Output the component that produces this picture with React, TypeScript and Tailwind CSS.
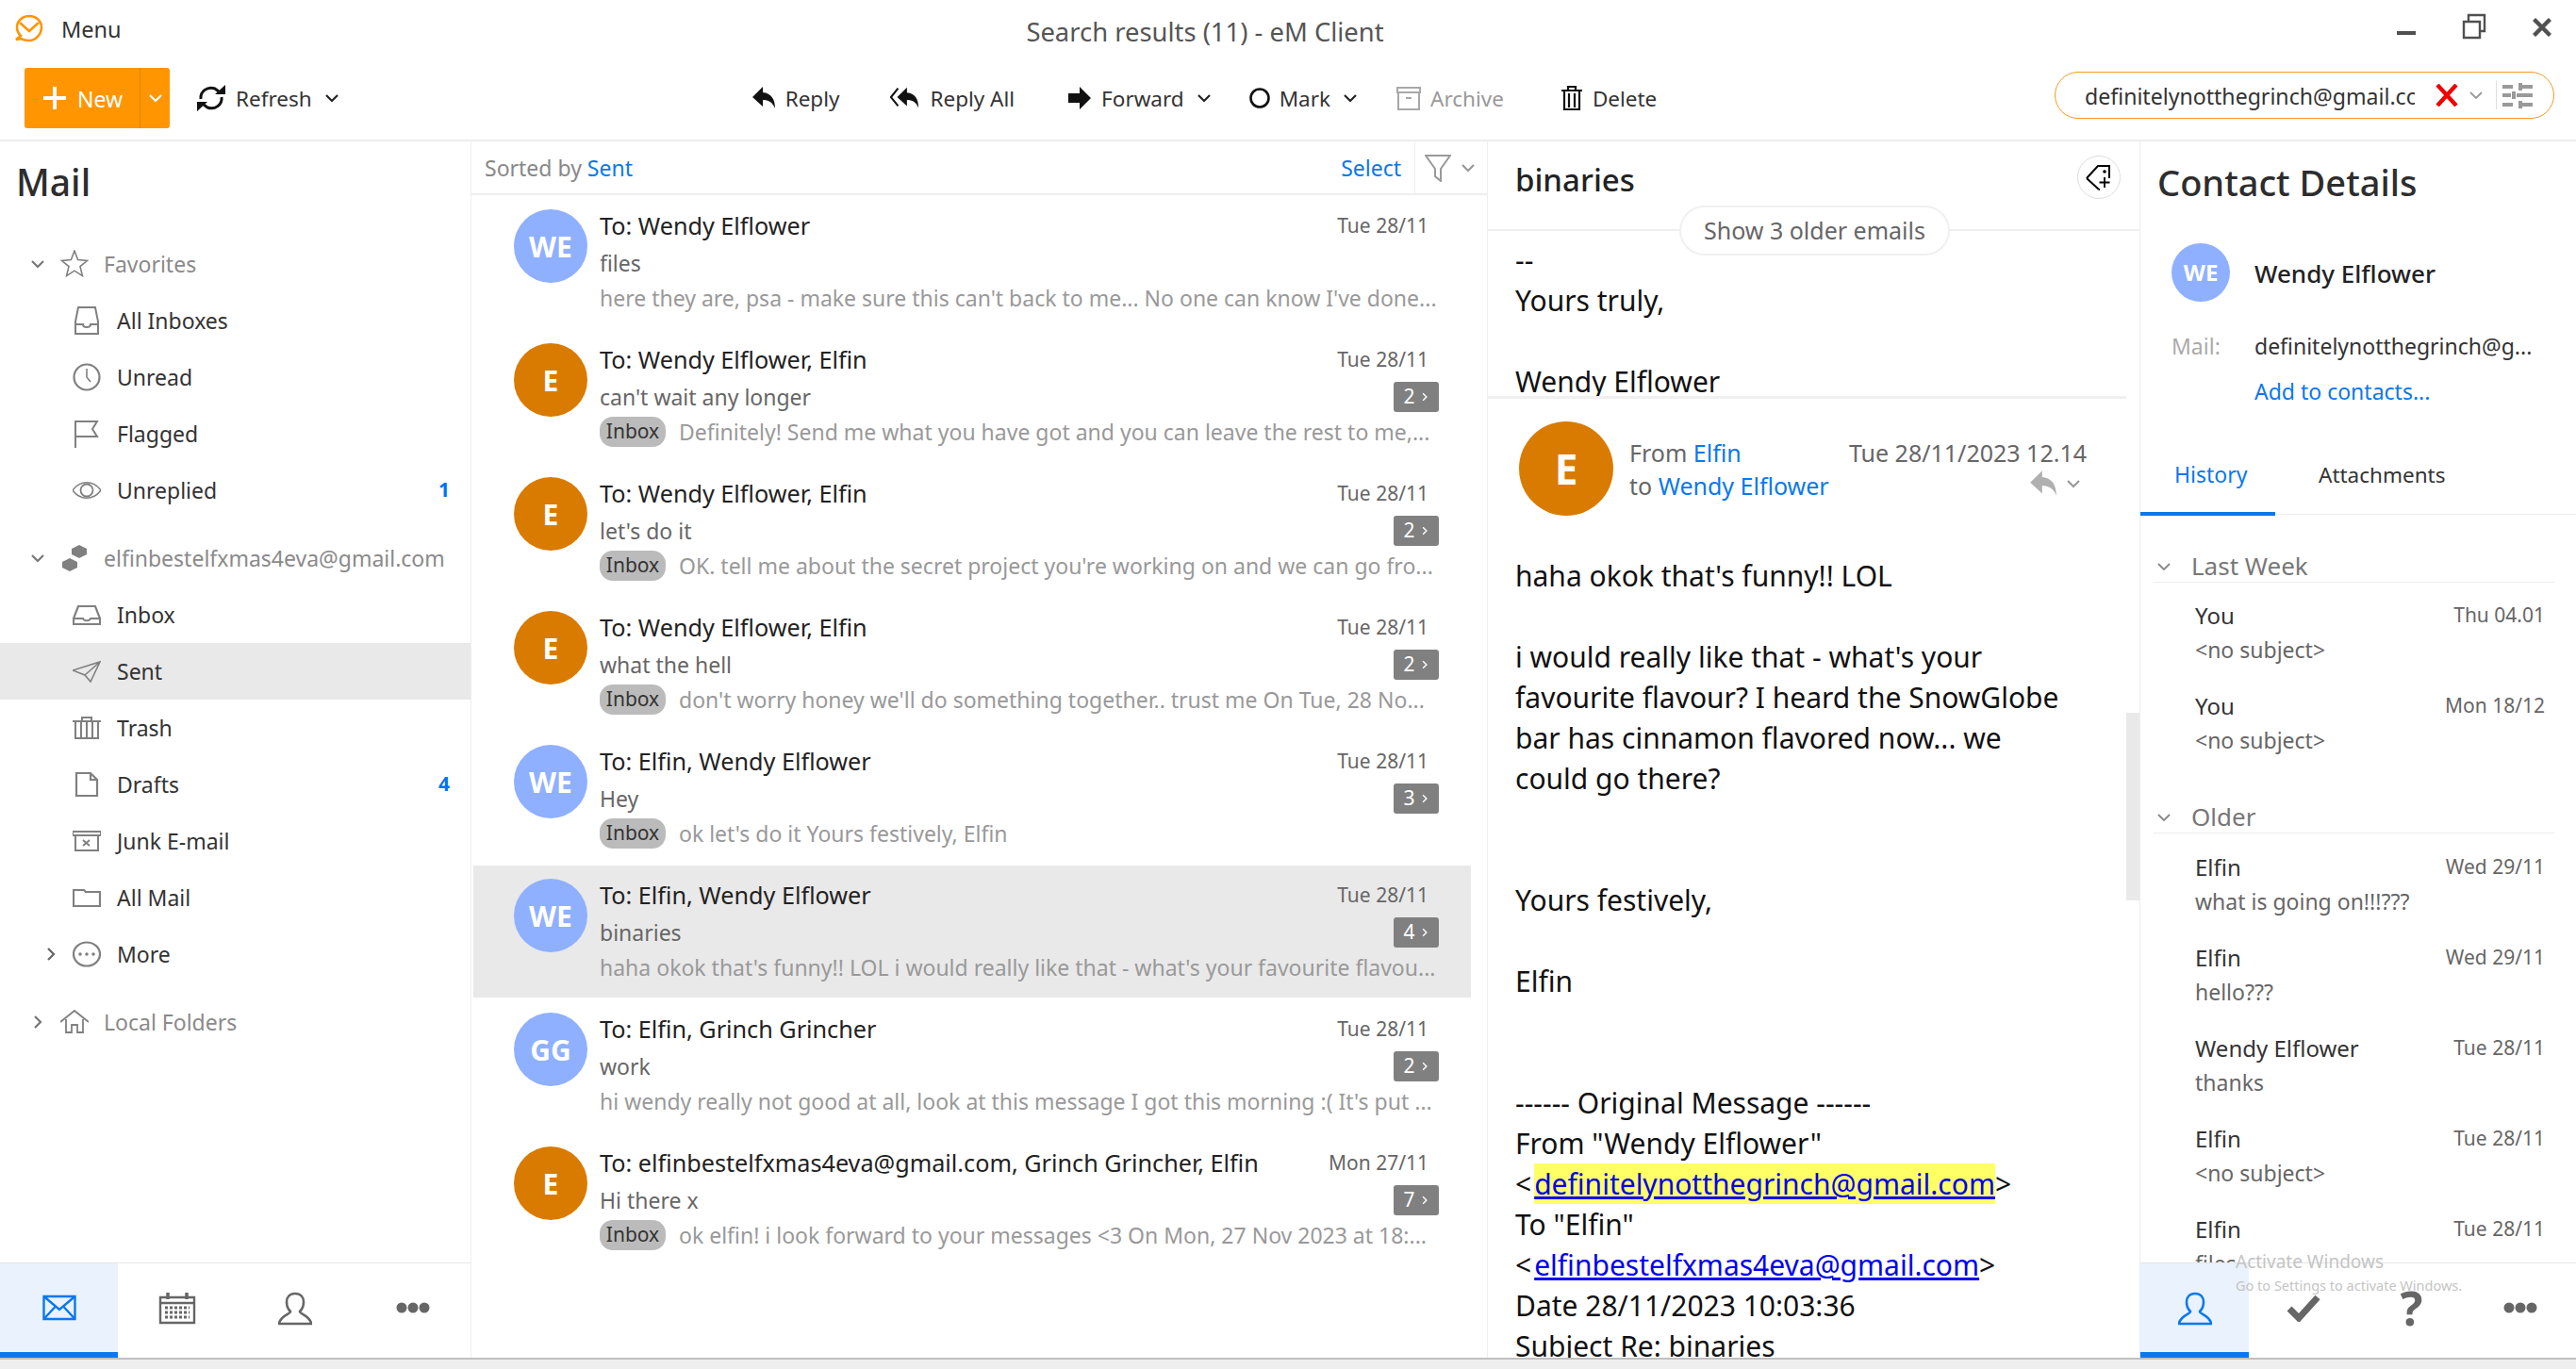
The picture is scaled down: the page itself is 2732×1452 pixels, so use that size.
import type { ReactNode } from 'react';

const FONT = 'font-["Noto_Sans","Open_Sans",sans-serif]';

function Icon({ children, w, h, vb, cls = '' }: { children: ReactNode; w: number; h: number; vb: string; cls?: string }) {
  return (
    <svg width={w} height={h} viewBox={vb} fill="none" stroke="currentColor" className={`shrink-0 ${cls}`}>
      {children}
    </svg>
  );
}

function Chevron({ dir = 'down', size = 16, cls = 'text-[#333]', sw = 2.2 }: { dir?: 'down' | 'right'; size?: number; cls?: string; sw?: number }) {
  return (
    <Icon w={size} h={size} vb="0 0 16 16" cls={cls}>
      {dir === 'down' ? <path d="M2 5l6 6 6-6" strokeWidth={sw} /> : <path d="M5 2l6 6-6 6" strokeWidth={sw} />}
    </Icon>
  );
}

const folderIcons: Record<string, ReactNode> = {
  star: <path d="M15 1l3.6 9.6 10 .8-7.6 6.2 2.4 10-8.4-5.4-8.4 5.4 2.4-10-7.6-6.2 10-.8z" strokeWidth="1.6" />,
  inboxTall: (
    <>
      <path d="M3 16L6 1h18l3 15v13H3z" strokeWidth="2" />
      <path d="M3 19h8c0 4 8 4 8 0h8" strokeWidth="2" />
    </>
  ),
  clock: (
    <>
      <circle cx="15" cy="15" r="13.5" strokeWidth="2.2" />
      <path d="M15 6v9l4 5" strokeWidth="1.6" />
    </>
  ),
  flag: <path d="M3 30V2h23l-5 8 5 8H3" strokeWidth="2" />,
  eye: (
    <>
      <path d="M0 15c8-11 22-11 30 0-8 11-22 11-30 0z" strokeWidth="1.5" />
      <circle cx="15" cy="15" r="6.5" strokeWidth="1.8" />
    </>
  ),
  inbox: (
    <>
      <path d="M1 19L6 6h18l5 13v6H1z" strokeWidth="2.2" />
      <path d="M1 19h10c1 3 7 3 8 0h10" strokeWidth="2" />
    </>
  ),
  send: <path d="M0 14L29 5 19 26l-6-7zM13 19L29 5" strokeWidth="1.6" />,
  trash: <path d="M0 8h30M10 8V4h10v4M3 8v18h24V8M9 8v18M15 8v18M21 8v18" strokeWidth="2" />,
  draft: <path d="M4 3h15l7 7v17H4zM19 3v7h7" strokeWidth="2.2" />,
  junk: <path d="M0 5h30v4H0zM3 9v16h24V9M11 14l7 6M18 14l-7 6" strokeWidth="2" />,
  folder: <path d="M1 7h11l2 2h15v15H1z" strokeWidth="2.2" />,
  more: (
    <>
      <ellipse cx="15" cy="15" rx="14" ry="12.5" strokeWidth="2.2" />
      <circle cx="8" cy="15" r="1.8" fill="currentColor" stroke="none" />
      <circle cx="15" cy="15" r="1.8" fill="currentColor" stroke="none" />
      <circle cx="22" cy="15" r="1.8" fill="currentColor" stroke="none" />
    </>
  ),
  home: <path d="M0 15L15 3l15 12M6 12v14h6v-8h6v8h6V12" strokeWidth="1.8" />,
};

function FolderIcon({ name }: { name: string }) {
  return (
    <Icon w={30} h={30} vb="0 0 30 30" cls="text-[#808080]">
      {folderIcons[name]}
    </Icon>
  );
}

function FolderRow({ icon, label, count, active, chevron }: { icon: string; label: string; count?: string; active?: boolean; chevron?: boolean }) {
  return (
    <div className={`flex h-[60px] items-center pl-[77px] pr-[22px] relative ${active ? 'bg-[#e9e9e9]' : ''}`}>
      {chevron && (
        <div className="absolute left-[46px]">
          <Chevron dir="right" size={16} cls="text-[#666]" />
        </div>
      )}
      <FolderIcon name={icon} />
      <span className="ml-[17px] text-[23px] text-[#333] flex-1">{label}</span>
      {count && <span className="text-[21px] font-bold text-[#0073f0]">{count}</span>}
    </div>
  );
}

function GroupRow({ open, icon, label, extra }: { open: boolean; icon: ReactNode; label: string; extra?: string }) {
  return (
    <div className={`flex h-[60px] items-center pl-[32px] ${extra ?? ''}`}>
      <div className="w-[16px] flex justify-center">
        <Chevron dir={open ? 'down' : 'right'} size={16} cls="text-[#777]" />
      </div>
      <div className="ml-[16px] w-[30px] flex justify-center">{icon}</div>
      <span className="ml-[16px] text-[23px] text-[#8a8a8a]">{label}</span>
    </div>
  );
}

function Sidebar() {
  return (
    <div className="w-[500px] shrink-0 border-r border-[#eeeeee] flex flex-col">
      <div className="h-[100px] pl-[17px] pt-[16px] text-[39px] leading-[54px] font-medium text-[#2d2d2d]">Mail</div>
      <GroupRow open icon={<FolderIcon name="star" />} label="Favorites" />
      <FolderRow icon="inboxTall" label="All Inboxes" />
      <FolderRow icon="clock" label="Unread" />
      <FolderRow icon="flag" label="Flagged" />
      <FolderRow icon="eye" label="Unreplied" count="1" />
      <GroupRow
        open
        extra="mt-[12px]"
        label="elfinbestelfxmas4eva@gmail.com"
        icon={
          <svg width="28" height="32" viewBox="0 0 28 32" className="text-[#808080] shrink-0" fill="currentColor">
            <path d="M11 6l8-4 8 4v6l-8 4-8-4zM1 20l8-4 8 4v6l-8 4-8-4z" />
          </svg>
        }
      />
      <FolderRow icon="inbox" label="Inbox" />
      <FolderRow icon="send" label="Sent" active />
      <FolderRow icon="trash" label="Trash" />
      <FolderRow icon="draft" label="Drafts" count="4" />
      <FolderRow icon="junk" label="Junk E-mail" />
      <FolderRow icon="folder" label="All Mail" />
      <FolderRow icon="more" label="More" chevron />
      <GroupRow open={false} extra="mt-[12px]" icon={<FolderIcon name="home" />} label="Local Folders" />
      <div className="mt-auto h-[101px] border-t border-[#e6e6e6] flex">
        <NavCell w="w-[125px]" active>
          <Icon w={36} h={28} vb="0 0 36 28" cls="text-[#0a78ee]">
            <path d="M1.5 2h33v24h-33zM1.5 2L18 16 34.5 2M1.5 26l12-13M34.5 26l-12-13" strokeWidth="2.4" />
          </Icon>
        </NavCell>
        <NavCell w="w-[125px]">
          <Icon w={40} h={36} vb="0 0 40 36" cls="text-[#666]">
            <path d="M2 7h36v27H2zM2 13h36" strokeWidth="2.4" />
            <path d="M10 2v7M30 2v7" strokeWidth="3.5" />
            <path d="M7 18h26M7 23h26M7 28h26" strokeWidth="3" strokeDasharray="3 2" />
          </Icon>
        </NavCell>
        <NavCell w="w-[125px]">
          <PersonIcon cls="text-[#666]" />
        </NavCell>
        <NavCell w="w-[125px]">
          <Dots />
        </NavCell>
      </div>
    </div>
  );
}

function PersonIcon({ cls }: { cls: string }) {
  return (
    <Icon w={36} h={36} vb="0 0 36 36" cls={`mt-[2px] ${cls}`}>
      <path d="M18 2c6 0 9 4 9 9 0 4-2 8-4 10 0 3 11 4 12 13H1c1-9 12-10 12-13-2-2-4-6-4-10 0-5 3-9 9-9z" strokeWidth="2.6" />
    </Icon>
  );
}

function Dots() {
  return (
    <svg width="36" height="12" viewBox="0 0 36 12" className="text-[#666]" fill="currentColor">
      <circle cx="6" cy="6" r="5.5" />
      <circle cx="18" cy="6" r="5.5" />
      <circle cx="30" cy="6" r="5.5" />
    </svg>
  );
}

function NavCell({ children, active, w }: { children: ReactNode; active?: boolean; w: string }) {
  return (
    <div className={`${w} shrink-0 flex items-center justify-center border-b-[6px] ${active ? 'bg-[#e9f2fd] border-[#0a78ee]' : 'border-transparent'}`}>
      {children}
    </div>
  );
}

type Msg = { initials: string; to: string; subject: string; date: string; preview: string; badge?: string; inbox?: boolean; active?: boolean };

const messages: Msg[] = [
  { initials: 'WE', to: 'To: Wendy Elflower', subject: 'files', date: 'Tue 28/11', preview: "here they are, psa - make sure this can't back to me... No one can know I've done..." },
  { initials: 'E', to: 'To: Wendy Elflower, Elfin', subject: "can't wait any longer", date: 'Tue 28/11', badge: '2', inbox: true, preview: 'Definitely! Send me what you have got and you can leave the rest to me,...' },
  { initials: 'E', to: 'To: Wendy Elflower, Elfin', subject: "let's do it", date: 'Tue 28/11', badge: '2', inbox: true, preview: "OK. tell me about the secret project you're working on and we can go fro..." },
  { initials: 'E', to: 'To: Wendy Elflower, Elfin', subject: 'what the hell', date: 'Tue 28/11', badge: '2', inbox: true, preview: "don't worry honey we'll do something together.. trust me On Tue, 28 No..." },
  { initials: 'WE', to: 'To: Elfin, Wendy Elflower', subject: 'Hey', date: 'Tue 28/11', badge: '3', inbox: true, preview: "ok let's do it Yours festively, Elfin" },
  { initials: 'WE', to: 'To: Elfin, Wendy Elflower', subject: 'binaries', date: 'Tue 28/11', badge: '4', active: true, preview: "haha okok that's funny!! LOL i would really like that - what's your favourite flavou..." },
  { initials: 'GG', to: 'To: Elfin, Grinch Grincher', subject: 'work', date: 'Tue 28/11', badge: '2', preview: "hi wendy really not good at all, look at this message I got this morning :( It's put ..." },
  { initials: 'E', to: 'To: elfinbestelfxmas4eva@gmail.com, Grinch Grincher, Elfin', subject: 'Hi there x', date: 'Mon 27/11', badge: '7', inbox: true, preview: 'ok elfin! i look forward to your messages <3 On Mon, 27 Nov 2023 at 18:...' },
];

function Avatar({ initials, size, text }: { initials: string; size: string; text: string }) {
  return (
    <div className={`${size} ${text} ${initials === 'E' ? 'bg-[#d97b00]' : 'bg-[#8fb0ff]'} shrink-0 rounded-full flex items-center justify-center font-bold text-white`}>
      {initials}
    </div>
  );
}

function MessageRow({ m }: { m: Msg }) {
  return (
    <div className={`h-[140px] mb-[2px] flex pl-[43px] pr-[34px] pt-[14px] ${m.active ? 'bg-[#e9e9e9]' : ''}`}>
      <Avatar initials={m.initials} size="w-[78px] h-[78px]" text="text-[30px]" />
      <div className="ml-[13px] flex-1 min-w-0">
        <div className="flex h-[36px] items-center justify-between">
          <span className="text-[25.2px] text-[#222] whitespace-nowrap">{m.to}</span>
          <span className="text-[21px] text-[#666] mr-[11px]">{m.date}</span>
        </div>
        <div className="flex h-[38px] items-center justify-between mt-[1px]">
          <span className="text-[23px] text-[#666] mt-[2px]">{m.subject}</span>
          {m.badge && (
            <span className="w-[48px] h-[32px] mt-[1px] rounded-[3px] bg-[#808080] text-white text-[21px] flex items-center justify-center gap-[5px]">
              {m.badge}
              <Chevron dir="right" size={10} cls="text-white" />
            </span>
          )}
        </div>
        <div className="flex h-[38px] items-center">
          {m.inbox && <span className="w-[70px] h-[32px] mr-[14px] shrink-0 rounded-[14px] bg-[#bbbbbb] text-[21px] text-[#333] flex items-center justify-center">Inbox</span>}
          <span className="text-[23px] text-[#999] whitespace-nowrap">{m.preview}</span>
        </div>
      </div>
    </div>
  );
}

function MessageList() {
  return (
    <div className="w-[1077px] shrink-0 flex flex-col overflow-hidden">
      <div className="h-[57px] shrink-0 border-b-2 border-[#eeeeee] flex items-center pl-[14px] text-[23px]">
        <span className="text-[#888] mt-[2px]">Sorted by&nbsp;</span>
        <span className="text-[#0a78ee] mt-[2px]">Sent</span>
        <span className="ml-auto text-[#0a78ee] mt-[2px]">Select</span>
        <div className="ml-[14px] h-full border-l border-[#eeeeee] pl-[10px] pr-[12px] flex items-center gap-[10px]">
          <Icon w={28} h={30} vb="0 0 28 30" cls="text-[#999]">
            <path d="M1 2h26L17 16v13l-6-5v-8z" strokeWidth="2" />
          </Icon>
          <Chevron size={16} cls="text-[#999]" />
        </div>
      </div>
      <div className="pr-[17px] pl-[2px] pt-[1px]">
        {messages.map((m, i) => (
          <MessageRow key={i} m={m} />
        ))}
      </div>
    </div>
  );
}

function ReplyIcon({ w, h, cls }: { w: number; h: number; cls: string }) {
  return (
    <svg width={w} height={h} viewBox="0 0 26 26" className={`shrink-0 ${cls}`} fill="currentColor">
      <path d="M12 1L1 12l11 10v-7c6 0 10 2 13 9 0-10-4-16-13-17z" />
    </svg>
  );
}

function MessagePane() {
  return (
    <div className="w-[693px] shrink-0 border-x border-[#eeeeee] flex flex-col relative overflow-hidden">
      <div className="h-[95px] shrink-0 border-b-[2px] border-[#efefef] pl-[29px] pt-[16px] flex justify-between pr-[20px]">
        <span className="text-[33px] leading-[50px] font-medium text-[#222]">binaries</span>
        <div className="w-[46px] h-[46px] mt-[-1px] rounded-full border border-[#ddd] flex items-center justify-center">
          <Icon w={30} h={30} vb="0 0 30 30" cls="text-black">
            <path d="M2 16L14 3h12v13M15 28L2 16M16 28h-1" strokeWidth="2" />
            <circle cx="21" cy="9" r="1.8" fill="currentColor" stroke="none" />
            <path d="M21 15v11M15.5 20.5h11" strokeWidth="1.8" />
          </Icon>
        </div>
      </div>
      <div className="absolute top-[68px] left-[203px] w-[287px] h-[53px] rounded-full bg-white border-2 border-[#f0f0f0] flex items-center justify-center text-[25px] text-[#666]">
        Show 3 older emails
      </div>
      <div className="h-[178px] shrink-0 overflow-hidden border-b-[3px] border-[#f0f0f0] mr-[14px] pl-[29px] pt-[9px] text-[30px] leading-[43px] text-[#111]">
        <div>--</div>
        <div>Yours truly,</div>
        <div>&nbsp;</div>
        <div>Wendy Elflower</div>
      </div>
      <div className="h-[166px] shrink-0 pl-[33px] pr-[56px] pt-[24px] flex">
        <Avatar initials="E" size="w-[100px] h-[100px]" text="text-[44px]" />
        <div className="ml-[17px] text-[25px] leading-[35px] text-[#666] pt-[16px]">
          <div>
            From <span className="text-[#0a78ee]">Elfin</span>
          </div>
          <div>
            to <span className="text-[#0a78ee]">Wendy Elflower</span>
          </div>
        </div>
        <div className="ml-auto pt-[15px] flex flex-col items-end">
          <span className="text-[25px] leading-[36px] text-[#666]">Tue 28/11/2023 12.14</span>
          <div className="flex items-center gap-[6px] mr-[6px]">
            <ReplyIcon w={36} h={30} cls="text-[#b0b0b0]" />
            <Chevron size={16} cls="text-[#999]" />
          </div>
        </div>
      </div>
      <div className="pl-[29px] pr-[20px] text-[30px] leading-[43px] text-[#111]">
        <div>haha okok that's funny!! LOL</div>
        <div>&nbsp;</div>
        <div>i would really like that - what's your</div>
        <div>favourite flavour? I heard the SnowGlobe</div>
        <div>bar has cinnamon flavored now... we</div>
        <div>could go there?</div>
        <div>&nbsp;</div>
        <div>&nbsp;</div>
        <div>Yours festively,</div>
        <div>&nbsp;</div>
        <div>Elfin</div>
        <div>&nbsp;</div>
        <div>&nbsp;</div>
        <div>------ Original Message ------</div>
        <div>From "Wendy Elflower"</div>
        <div>
          &lt;<span className="ml-[3px] inline-block bg-[#ffff66] text-[#0000ee] underline">definitelynotthegrinch@gmail.com</span>&gt;
        </div>
        <div>To "Elfin"</div>
        <div>
          &lt;<span className="ml-[3px] text-[#0000ee] underline">elfinbestelfxmas4eva@gmail.com</span>&gt;
        </div>
        <div>Date 28/11/2023 10:03:36</div>
        <div>Subject Re: binaries</div>
      </div>
      <div className="absolute right-0 top-[606px] w-[14px] h-[199px] bg-[#e9e9e9]" />
    </div>
  );
}

function HistoryItem({ name, sub, date }: { name: string; sub: string; date: string }) {
  return (
    <div className="h-[96px] pl-[58px] pr-[33px]">
      <div className="flex justify-between items-center h-[36px]">
        <span className="text-[24px] text-[#333]">{name}</span>
        <span className="text-[21px] text-[#666]">{date}</span>
      </div>
      <div className="text-[23px] leading-[36px] text-[#666]">{sub}</div>
    </div>
  );
}

function HistoryHeader({ label }: { label: string }) {
  return (
    <div className="h-[34px] ml-[14px] mr-[23px] pl-[3px] flex items-center border-b border-[#eeeeee] text-[26px] text-[#777]">
      <Chevron size={16} cls="text-[#888]" sw={1.8} />
      <span className="ml-[21px]">{label}</span>
    </div>
  );
}

function ContactPane() {
  return (
    <div className="flex-1 min-w-0 flex flex-col relative">
      <div className="h-[99px] shrink-0 pl-[18px] pt-[16px] text-[38px] leading-[54px] font-medium text-[#2d2d2d]">Contact Details</div>
      <div className="flex items-center pl-[33px] h-[62px] mt-[9px]">
        <Avatar initials="WE" size="w-[62px] h-[62px]" text="text-[24px]" />
        <span className="ml-[26px] mt-[2px] text-[26px] font-medium text-[#222]">Wendy Elflower</span>
      </div>
      <div className="flex items-center pl-[33px] mt-[27px] h-[40px] text-[23px]">
        <span className="w-[88px] text-[#aaa]">Mail:</span>
        <span className="text-[#333]">definitelynotthegrinch@g...</span>
      </div>
      <div className="pl-[121px] h-[40px] mt-[8px] flex items-center text-[23px] text-[#0a78ee]">Add to contacts...</div>
      <div className="flex h-[86px] mt-[25px] border-b border-[#eeeeee] text-[23px]">
        <div className="w-[143px] h-[87px] pl-[36px] pt-[3px] flex items-center border-b-[4px] border-[#0a78ee] text-[#0a78ee]">History</div>
        <div className="pl-[46px] pt-[3px] flex items-center text-[22.5px] text-[#333]">Attachments</div>
      </div>
      <div className="flex-1 min-h-0 overflow-hidden pt-[38px]">
        <HistoryHeader label="Last Week" />
        <div className="h-[17px]" />
        <HistoryItem name="You" sub="<no subject>" date="Thu 04.01" />
        <HistoryItem name="You" sub="<no subject>" date="Mon 18/12" />
        <div className="h-[23px]" />
        <HistoryHeader label="Older" />
        <div className="h-[18px]" />
        <HistoryItem name="Elfin" sub="what is going on!!!???" date="Wed 29/11" />
        <HistoryItem name="Elfin" sub="hello???" date="Wed 29/11" />
        <HistoryItem name="Wendy Elflower" sub="thanks" date="Tue 28/11" />
        <HistoryItem name="Elfin" sub="<no subject>" date="Tue 28/11" />
        <HistoryItem name="Elfin" sub="files" date="Tue 28/11" />
      </div>
      <div className="h-[101px] shrink-0 border-t border-[#e6e6e6] flex bg-white">
        <NavCell w="w-[115px]" active>
          <PersonIcon cls="text-[#0a78ee]" />
        </NavCell>
        <NavCell w="w-[115px]">
          <svg width="36" height="30" viewBox="0 0 36 30" className="text-[#666]" fill="none" stroke="currentColor">
            <path d="M3 16l10 10L33 4" strokeWidth="7" />
          </svg>
        </NavCell>
        <NavCell w="w-[115px]">
          <span className="text-[50px] leading-none font-bold text-[#666]">?</span>
        </NavCell>
        <NavCell w="w-[115px]">
          <Dots />
        </NavCell>
      </div>
    </div>
  );
}

function ToolButton({ icon, label, chevron, muted, cls }: { icon: ReactNode; label: string; chevron?: boolean; muted?: boolean; cls: string }) {
  return (
    <div className={`flex items-center ${cls}`}>
      {icon}
      <span className={`ml-[10px] mt-[2px] text-[22.5px] ${muted ? 'text-[#999]' : 'text-[#333]'}`}>{label}</span>
      {chevron && (
        <div className="ml-[13px]">
          <Chevron size={16} cls="text-[#222]" />
        </div>
      )}
    </div>
  );
}

export default function App() {
  return (
    <div className={`${FONT} w-[2732px] h-[1452px] bg-white flex flex-col overflow-hidden relative`}>
      <div className="h-[60px] shrink-0 flex items-center relative pl-[16px]">
        <svg width="30" height="30" viewBox="0 0 30 30" fill="none" stroke="#ff9500" strokeWidth="2.6" className="shrink-0">
          <path d="M6 23C3 20 2 17 2 14 2 7 8 2 15 2s13 5 13 12-6 14-13 14c-4 0-7-1-9-2l-5 1z" />
          <path d="M5 9l10 9 10-9" />
        </svg>
        <span className="ml-[19px] mt-[4px] text-[23.5px] text-[#333]">Menu</span>
        <span className="absolute left-[1037px] w-[482px] mt-[8px] text-center whitespace-nowrap text-[27.4px] text-[#555]">Search results (11) - eM Client</span>
        <div className="ml-auto flex items-center text-[#505050]">
          <div className="w-[20px] h-[4px] bg-[#505050] mt-[10px]" />
          <svg width="26" height="28" viewBox="0 0 26 28" fill="none" stroke="currentColor" strokeWidth="2.4" className="ml-[49px] mb-[4px]">
            <path d="M2 9h17v17H2zM7 9V2h17v17h-5" />
          </svg>
          <svg width="20" height="20" viewBox="0 0 20 20" fill="none" stroke="currentColor" strokeWidth="4.4" className="ml-[49px] mr-[26px] mb-[3px]">
            <path d="M1.5 1.5l17 17M18.5 1.5l-17 17" />
          </svg>
        </div>
      </div>

      <div className="h-[90px] shrink-0 flex items-start pl-[26px] border-b-2 border-[#eeeeee]">
        <div className="flex items-center w-[154px] h-[64px] mt-[12px] rounded-[3px] bg-[#ff9500] text-white">
          <div className="w-[123px] h-full flex items-center pl-[19px] border-r border-[#df8300]">
            <svg width="26" height="26" viewBox="0 0 26 26" stroke="currentColor" strokeWidth="4">
              <path d="M13 1v24M1 13h24" />
            </svg>
            <span className="ml-[11px] mt-[2px] text-[23px]">New</span>
          </div>
          <div className="flex-1 flex justify-center">
            <Chevron size={16} cls="text-white" />
          </div>
        </div>
        <div className="h-[64px] mt-[12px] flex items-center">
          <ToolButton
            cls="ml-[28px]"
            label="Refresh"
            chevron
            icon={
              <svg width="32" height="28" viewBox="0 0 32 28" fill="none" stroke="#111" strokeWidth="3">
                <path d="M5 15C4 7 12 1 20 4l4 3M27 13c1 8-7 14-15 11l-4-3" />
                <path d="M20 10h11V0zM12 18H1v10z" fill="#111" stroke="none" />
              </svg>
            }
          />
          <ToolButton cls="ml-[437px]" label="Reply" icon={<ReplyIcon w={26} h={26} cls="text-[#111]" />} />
          <ToolButton
            cls="ml-[54px]"
            label="Reply All"
            icon={
              <svg width="32" height="26" viewBox="0 0 34 26" className="text-[#111]" fill="currentColor">
                <path d="M19 1L8 12l11 10v-7c6 0 10 2 13 9 0-10-4-16-13-17z" />
                <path d="M9 2L1 12l8 10" fill="none" stroke="currentColor" strokeWidth="2.2" />
              </svg>
            }
          />
          <ToolButton
            cls="ml-[56px]"
            label="Forward"
            chevron
            icon={
              <svg width="26" height="26" viewBox="0 0 26 26" className="text-[#111]" fill="currentColor">
                <path d="M1 8h12V1l12 12-12 12v-7H1z" />
              </svg>
            }
          />
          <ToolButton
            cls="ml-[40px]"
            label="Mark"
            chevron
            icon={
              <svg width="22" height="22" viewBox="0 0 22 22" fill="none" stroke="#111" strokeWidth="2.6">
                <circle cx="11" cy="11" r="9.5" />
              </svg>
            }
          />
          <ToolButton
            cls="ml-[41px]"
            label="Archive"
            muted
            icon={
              <svg width="26" height="26" viewBox="0 0 26 26" fill="none" stroke="#a8a8a8" strokeWidth="2">
                <path d="M1 2h24v5H1zM2 7v18h22V7M10 13h6" />
              </svg>
            }
          />
          <ToolButton
            cls="ml-[60px]"
            label="Delete"
            icon={
              <svg width="24" height="28" viewBox="0 0 24 28" fill="none" stroke="#111" strokeWidth="2.2">
                <path d="M1 6h22M8 6V2h8v4M4 6v20h16V6M9 9v15M15 9v15" />
              </svg>
            }
          />
        </div>
        <div className="ml-auto mr-[23px] mt-[16px] w-[530px] h-[50px] rounded-full border border-[#f39a1f] flex items-center pl-[31px]">
          <span className="w-[350px] mt-[2px] overflow-hidden whitespace-nowrap text-[23.1px] text-[#333]">definitelynotthegrinch@gmail.co</span>
          <svg width="24" height="24" viewBox="0 0 24 24" stroke="#f00000" strokeWidth="4.4" className="ml-[22px]">
            <path d="M2 1l20 22M22 1L2 23" />
          </svg>
          <div className="ml-[11px]">
            <Chevron size={16} cls="text-[#999]" sw={1.8} />
          </div>
          <div className="ml-[13px] w-[1px] h-[30px] bg-[#ddd]" />
          <svg width="33" height="28" viewBox="0 0 33 28" stroke="#999" strokeWidth="4" className="ml-[5px]">
            <path d="M1 5h11M20 5h13M1 14h9M16 14h17M1 24h11M20 24h13M20 1v8M13 10v8M20 20v8" />
          </svg>
        </div>
      </div>

      <div className="flex-1 min-h-0 flex">
        <Sidebar />
        <MessageList />
        <MessagePane />
        <ContactPane />
      </div>

      <div className="h-[12px] shrink-0 border-t-2 border-[#c0c0c0] bg-[#eeeeee]" />

      <div className="absolute left-[2371px] top-[1323px] pointer-events-none whitespace-nowrap">
        <div className="text-[19px] leading-[30px] text-[#c4c4c4]">Activate Windows</div>
        <div className="text-[14.5px] leading-[20px] text-[#c4c4c4]">Go to Settings to activate Windows.</div>
      </div>
    </div>
  );
}
